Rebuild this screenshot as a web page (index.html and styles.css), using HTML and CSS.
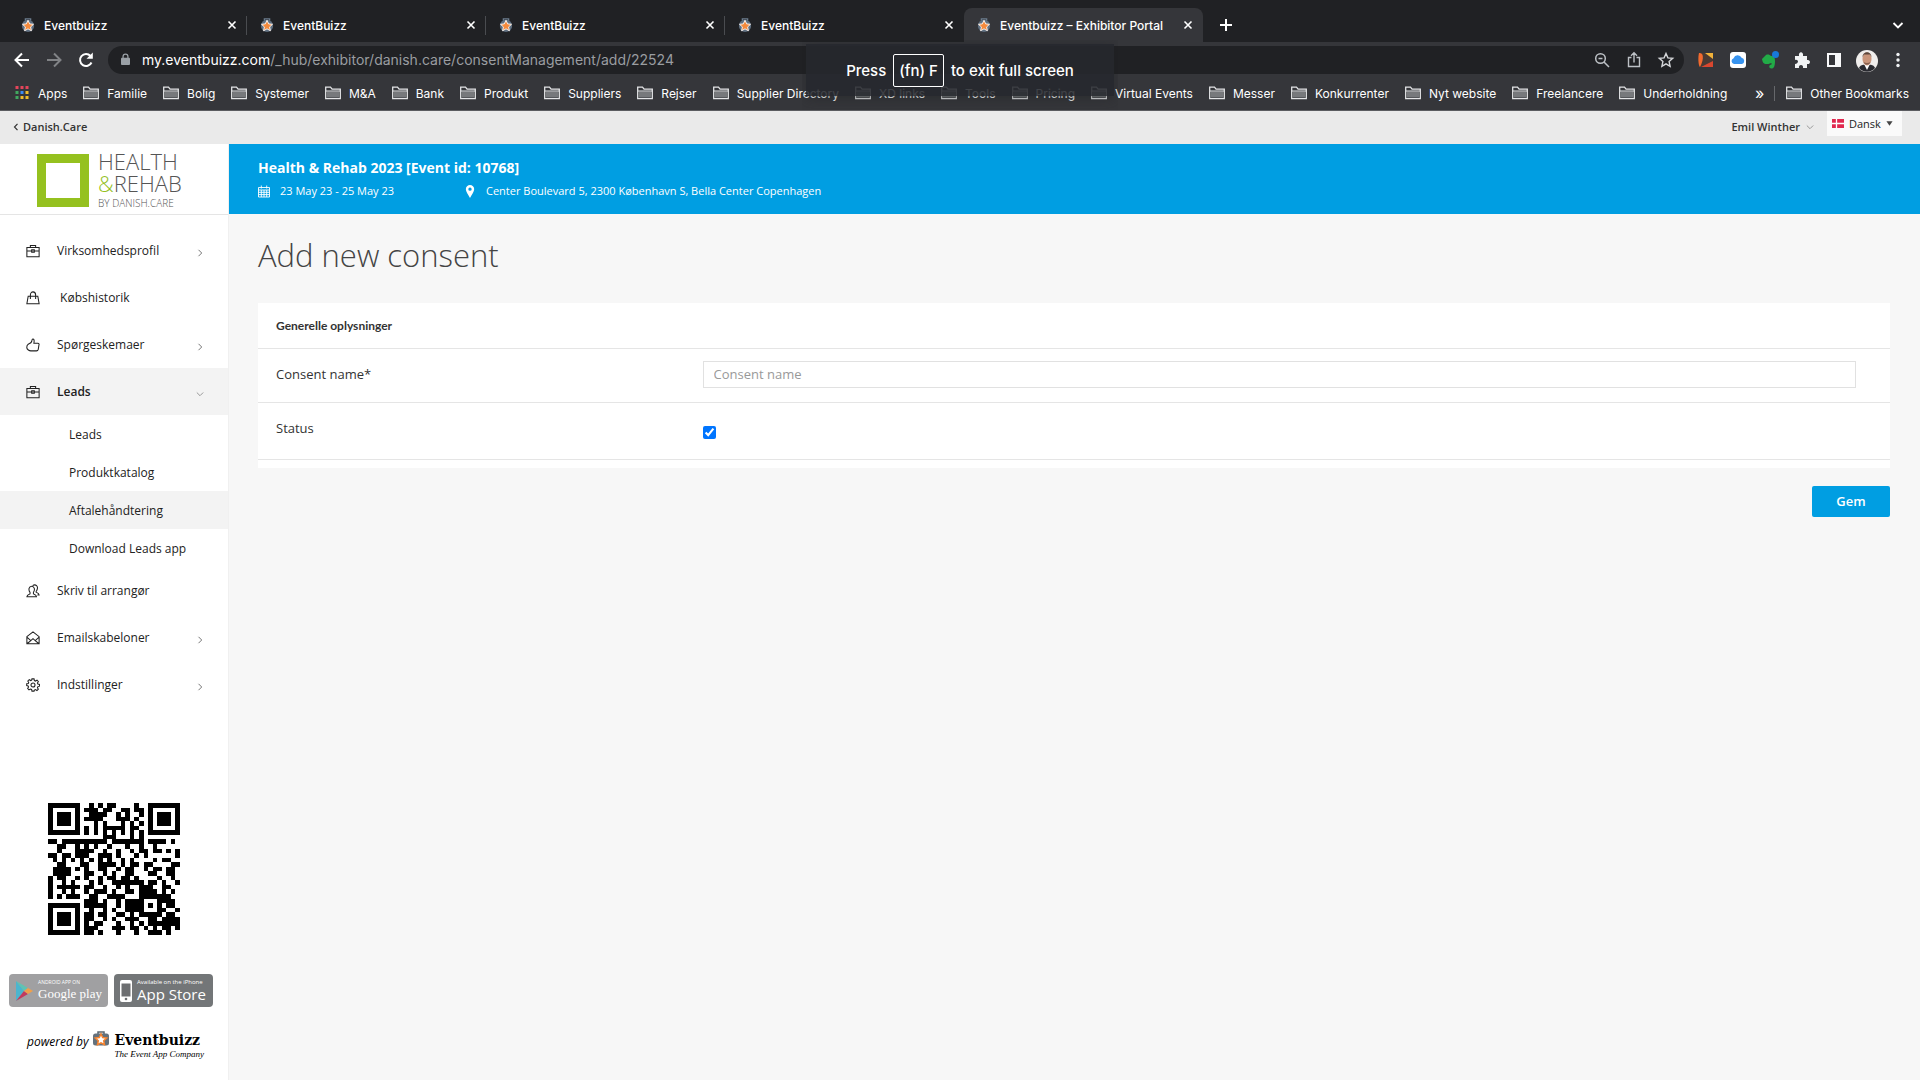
FILE: index.html
```html
<!DOCTYPE html>
<html lang="da">
<head>
    <meta charset="UTF-8">
    <meta name="viewport" content="width=device-width, initial-scale=1.0">
    <title>Eventbuizz – Exhibitor Portal</title>
    <link rel="stylesheet" href="styles.css">
</head>
<body>
    <!-- Shared icons -->
    <svg class="sprite" aria-hidden="true">
        <symbol id="favicon" viewBox="0 0 16 16">
            <path d="M5 3V1h6v2" fill="none" stroke="#6b7c8d" stroke-width="1.5"/>
            <circle cx="8" cy="9" r="7" fill="#5f6f80"/>
            <path d="M8 2.6l1.9 4.1 4.4.5-3.3 3 .9 4.4L8 12.4l-3.9 2.2.9-4.4-3.3-3 4.4-.5z" fill="#f58a3c" stroke="#fff" stroke-width="1"/>
        </symbol>
        <symbol id="cross" viewBox="0 0 10 10"><path d="M1.5 1.5l7 7M8.500 1.500l-7 7" fill="none" stroke="#fff" stroke-width="1.600"/></symbol>
        <symbol id="folder" viewBox="0 0 16 14">
            <path d="M.7 12.600V1.200h4.800l1.600 2h8.200v9.400z" fill="none" stroke="#e3e4e6" stroke-width="1.300"/>
            <path d="M2 5.500h12v6H2z" fill="#77797c"/>
            <path d="M1 5h14" stroke="#e3e4e6"/>
        </symbol>
        <symbol id="right" viewBox="0 0 8 8"><path d="M2.500.8L5.700 4 2.500 7.200" fill="none" stroke="#777"/></symbol>
        <symbol id="down" viewBox="0 0 8 8"><path d="M.8 2.500L4 5.700l3.200-3.200" fill="none" stroke="#999"/></symbol>
        <symbol id="case" viewBox="0 0 16 16">
            <path d="M1 4h14v10.500H1zM5 4V1.700h6V4M1 8h5.500M9.500 8H15M6.500 6.500h3v3h-3zM8 7.500v1" fill="none" stroke="#222" stroke-width="1.200"/>
        </symbol>
        <symbol id="bag" viewBox="0 0 16 16">
            <path d="M2.500 6h11L15 14.500H1zM5 9V4.500a3 3.500 0 0 1 6 0V9" fill="none" stroke="#222" stroke-width="1.200"/>
        </symbol>
        <symbol id="thumb" viewBox="0 0 16 16">
            <path d="M2 7.500c1-1 3.800-1.200 4.500-3.500.2-1 .2-2.500 1.200-2.800 1.500-.2 2 1.500 1.300 4.800h4.500c1.500 0 1.700 1.300 1.300 2L14 13c-.3 1.200-1 1.700-2 1.700H5.500C4 14.700 1 13.500.9 11c0-1.500.3-2.800 1.100-3.500z" fill="none" stroke="#222" stroke-width="1.200"/>
        </symbol>
        <symbol id="users" viewBox="0 0 16 16">
            <path d="M1 14.500c0-2 1-2.300 3.600-3.300V9.500C2.500 6.800 3.200 2.500 6.500 2.500s4 4.300 2 7v1.700c2.500 1 3.500 1.300 3.500 3.300zM7.500 1.800c3.500-2.200 7 .7 5 5.200-.6 1-1 1.200-1 2.300 2.500 1 3.500 1.500 3.500 3.200h-2" fill="none" stroke="#222" stroke-width="1.200"/>
        </symbol>
        <symbol id="mail" viewBox="0 0 16 16">
            <path d="M1 6.500L8 1l7 5.500v8H1zM1 7l4.500 4L8 8.700l2.500 2.300L15 7M1.500 14.300l4-3.300M14.500 14.300l-4-3.300" fill="none" stroke="#222" stroke-width="1.200"/>
        </symbol>
        <symbol id="gear" viewBox="0 0 16 16">
            <path d="M6.800 1h2.400l.4 1.900 1.300.6 1.700-1.100 1.500 1.600-1 1.700.5 1.200 1.900.4v2l-1.900.5-.5 1.300 1 1.700-1.600 1.500-1.700-1-1.200.5L9.200 15H6.800l-.4-1.900-1.300-.5-1.700 1-1.500-1.600 1-1.700-.5-1.300L.8 8.600v-2l1.800-.3.500-1.200-1-1.700 1.600-1.500 1.600 1 1.200-.5z" fill="none" stroke="#222" stroke-width="1.200"/>
            <circle cx="8" cy="8" r="2.300" fill="none" stroke="#222" stroke-width="1.200"/>
        </symbol>
    </svg>

    <!-- Browser window -->
    <div class="browser">
        <div class="tabs">
            <div class="tab"><svg class="fav"><use href="#favicon"/></svg><span>Eventbuizz</span><button aria-label="Close"><svg><use href="#cross"/></svg></button></div>
            <div class="tab"><svg class="fav"><use href="#favicon"/></svg><span>EventBuizz</span><button aria-label="Close"><svg><use href="#cross"/></svg></button></div>
            <div class="tab"><svg class="fav"><use href="#favicon"/></svg><span>EventBuizz</span><button aria-label="Close"><svg><use href="#cross"/></svg></button></div>
            <div class="tab last"><svg class="fav"><use href="#favicon"/></svg><span>EventBuizz</span><button aria-label="Close"><svg><use href="#cross"/></svg></button></div>
            <div class="tab active"><svg class="fav"><use href="#favicon"/></svg><span>Eventbuizz – Exhibitor Portal</span><button aria-label="Close"><svg><use href="#cross"/></svg></button></div>
            <button class="tool new-tab" aria-label="New tab"><svg viewBox="0 0 20 20"><path d="M10 4v12M4 10h12" stroke="#fff" stroke-width="2"/></svg></button>
            <button class="tool tab-list" aria-label="Search tabs"><svg viewBox="0 0 20 20"><path d="M5.500 8l4.500 4.500L14.500 8" fill="none" stroke="#fff" stroke-width="1.800"/></svg></button>
        </div>

        <div class="toolbar">
            <button class="tool" aria-label="Back"><svg viewBox="0 0 20 20"><path d="M17 10H4M10 3.500L3.500 10l6.500 6.500" fill="none" stroke="#fff" stroke-width="2"/></svg></button>
            <button class="tool" aria-label="Forward"><svg viewBox="0 0 20 20"><path d="M3 10h13M10 3.500l6.500 6.500-6.500 6.500" fill="none" stroke="#818386" stroke-width="2"/></svg></button>
            <button class="tool" aria-label="Reload"><svg viewBox="0 0 20 20"><path d="M15.500 12.500A6 6 0 1 1 14.500 6" fill="none" stroke="#fff" stroke-width="2"/><path d="M16.800 2.500v6.300h-6.300z" fill="#fff"/></svg></button>
            <div class="address">
                <svg class="lock" viewBox="0 0 10 14"><rect y="5" width="10" height="8" rx="1" fill="#9aa0a6"/><path d="M2.300 6V3.600a2.700 2.700 0 0 1 5.400 0V6" fill="none" stroke="#9aa0a6" stroke-width="1.400"/></svg>
                <div class="url">my.eventbuizz.com<span>/_hub/exhibitor/danish.care/consentManagement/add/22524</span></div>
                <button class="tool" aria-label="Zoom"><svg viewBox="0 0 20 20"><circle cx="8.500" cy="8.500" r="4.800" fill="none" stroke="#bdc1c6" stroke-width="1.500"/><path d="M12 12l5 5M6.500 8.500h4" stroke="#bdc1c6" stroke-width="1.500"/></svg></button>
                <button class="tool" aria-label="Share"><svg viewBox="0 0 20 20"><path d="M7.500 7.500h-3v9h11v-9h-3M10 12.500V3M7 5.800l3-3 3 3" fill="none" stroke="#bdc1c6" stroke-width="1.400"/></svg></button>
                <button class="tool" aria-label="Bookmark"><svg viewBox="0 0 20 20"><path d="M10 3.500l1.900 4.400 4.800.4-3.600 3.200 1 4.800-4.100-2.500-4.100 2.500 1-4.800-3.600-3.200 4.800-.4z" fill="none" stroke="#d5d7da" stroke-width="1.400"/></svg></button>
            </div>
            <button class="tool" aria-label="Extension"><svg viewBox="0 0 20 20"><path d="M3 3h14v14H3z" fill="#4a3a33"/><path d="M3 3c6-1 4 9 1 14-2-2-2-11-1-14z" fill="#f26a2e"/><path d="M9 3h8v6z" fill="#f0b23a"/><path d="M17 11v6H5z" fill="#d9472f"/></svg></button>
            <button class="tool" aria-label="iCloud"><svg viewBox="0 0 20 20"><rect x="2" y="2" width="16" height="16" rx="3" fill="#fff"/><path d="M6 14a3 3 0 0 1-.4-5.800 4.300 4.300 0 0 1 8-.4A3.200 3.200 0 0 1 14 14z" fill="#3793ef"/></svg></button>
            <button class="tool" aria-label="Evernote"><svg viewBox="0 0 20 20"><path d="M2 9l4-4c2-1 4 0 5 1 3 0 4 1 4 5 0 5-1 7.500-3.500 7.500-3 0-3-4 0-4v-1.500c-3 1-3 1-5 1-3 0-4-2-4.500-5z" fill="#22ab47"/><circle cx="15.500" cy="4.500" r="3.500" fill="#1879d8"/></svg></button>
            <button class="tool" aria-label="Extensions"><svg viewBox="0 0 20 20"><path d="M3 6h4c-1-5 5-5 4 0h4v4c4-1 4 5 0 4v4h-4c1-4-5-4-4 0H3v-4c4 0 4-5 0-4z" fill="#f1f3f4"/></svg></button>
            <button class="tool" aria-label="Side panel"><svg viewBox="0 0 20 20"><path d="M3 3h14v14H3zM5 5v10h6V5z" fill="#f8f9fa" fill-rule="evenodd"/></svg></button>
            <button class="tool" aria-label="Profile"><svg class="avatar" viewBox="0 0 22 22"><circle cx="11" cy="11" r="11" fill="#f0eeec"/><path d="M3 18c1-3 4-3.500 8-3.500s7 .5 8 3.500c-4 5-12 5-16 0z" fill="#292a30"/><path d="M8 14l3 6 3-6z" fill="#fff"/><ellipse cx="11" cy="9" rx="4.500" ry="6.500" fill="#c9957b"/><path d="M6.500 7c0-6.500 9-6.500 9 0l-1.500-2.500H8z" fill="#5d473c"/><path d="M7.500 12c1.500 3.500 5.500 3.500 7 0-2 1.300-5 1.300-7 0z" fill="#86604f"/></svg></button>
            <button class="tool" aria-label="Menu"><svg viewBox="0 0 20 20" fill="#f1f3f4"><circle cx="10" cy="4.500" r="1.700"/><circle cx="10" cy="10" r="1.700"/><circle cx="10" cy="15.500" r="1.700"/></svg></button>
        </div>

        <nav class="bookmarks">
            <a href="#"><svg viewBox="0 0 15 14"><path d="M1 0h3v3H1zM6 0h3v3H6zM11 0h3v3h-3z" fill="#e4455a"/><path d="M1 5h3v3H1zM1 10h3v3H1z" fill="#41a85f"/><path d="M6 5h3v3H6z" fill="#3d8bf2"/><path d="M11 5h3v3h-3zM6 10h3v3H6zM11 10h3v3h-3z" fill="#f2bd2c"/></svg>Apps</a>
            <a href="#"><svg><use href="#folder"/></svg>Familie</a>
            <a href="#"><svg><use href="#folder"/></svg>Bolig</a>
            <a href="#"><svg><use href="#folder"/></svg>Systemer</a>
            <a href="#"><svg><use href="#folder"/></svg>M&amp;A</a>
            <a href="#"><svg><use href="#folder"/></svg>Bank</a>
            <a href="#"><svg><use href="#folder"/></svg>Produkt</a>
            <a href="#"><svg><use href="#folder"/></svg>Suppliers</a>
            <a href="#"><svg><use href="#folder"/></svg>Rejser</a>
            <a href="#"><svg><use href="#folder"/></svg>Supplier Directory</a>
            <a href="#"><svg><use href="#folder"/></svg>XD links</a>
            <a href="#"><svg><use href="#folder"/></svg>Tools</a>
            <a href="#"><svg><use href="#folder"/></svg>Pricing</a>
            <a href="#"><svg><use href="#folder"/></svg>Virtual Events</a>
            <a href="#"><svg><use href="#folder"/></svg>Messer</a>
            <a href="#"><svg><use href="#folder"/></svg>Konkurrenter</a>
            <a href="#"><svg><use href="#folder"/></svg>Nyt website</a>
            <a href="#"><svg><use href="#folder"/></svg>Freelancere</a>
            <a href="#"><svg><use href="#folder"/></svg>Underholdning</a>
            <button class="more">»</button>
            <a href="#" class="other"><svg><use href="#folder"/></svg>Other Bookmarks</a>
        </nav>
        <div class="toast">Press <kbd>(fn) F</kbd> to exit full screen</div>
    </div>

    <!-- Account bar -->
    <div class="topbar">
        <a href="#" class="back"><svg viewBox="0 0 6 8"><path d="M4.500.8L1.500 4l3 3.200" fill="none" stroke="#333" stroke-width="1.200"/></svg>Danish.Care</a>
        <button class="account">Emil Winther <svg><use href="#down"/></svg></button>
        <div class="language">
            <svg class="flag" viewBox="0 0 12 9"><path d="M0 0h12v9H0z" fill="#e0284f"/><path d="M4.500 0v9M0 4.500h12" stroke="#fff" stroke-width="1.300"/></svg>
            <select aria-label="Sprog"><option>Dansk</option></select>
            <svg class="caret" viewBox="0 0 8 5"><path d="M.5 0h7L4 5z" fill="#444"/></svg>
        </div>
    </div>

    <div class="page">
        <aside class="sidebar">
            <div class="logo">
                <div class="logo-square"></div>
                <div class="logo-text">
                    <span>HEALTH</span>
                    <span><i>&amp;</i>REHAB</span>
                    <small>BY DANISH.CARE</small>
                </div>
            </div>
            <nav class="menu">
                <a href="#"><svg class="icon"><use href="#case"/></svg>Virksomhedsprofil<svg class="arrow"><use href="#right"/></svg></a>
                <a href="#"><svg class="icon"><use href="#bag"/></svg>&nbsp;Købshistorik</a>
                <a href="#"><svg class="icon"><use href="#thumb"/></svg>Spørgeskemaer<svg class="arrow"><use href="#right"/></svg></a>
                <a href="#" class="open"><svg class="icon"><use href="#case"/></svg>Leads<svg class="arrow"><use href="#down"/></svg></a>
                <div class="submenu">
                    <a href="#">Leads</a>
                    <a href="#">Produktkatalog</a>
                    <a href="#" class="current">Aftalehåndtering</a>
                    <a href="#">Download Leads app</a>
                </div>
                <a href="#"><svg class="icon"><use href="#users"/></svg>Skriv til arrangør</a>
                <a href="#"><svg class="icon"><use href="#mail"/></svg>Emailskabeloner<svg class="arrow"><use href="#right"/></svg></a>
                <a href="#"><svg class="icon"><use href="#gear"/></svg>Indstillinger<svg class="arrow"><use href="#right"/></svg></a>
            </nav>
            <svg class="qr" viewBox="0 0 29 29" shape-rendering="crispEdges"><path id="qr-path"/></svg>
            <div class="stores">
                <a href="#" class="store google">
                    <svg viewBox="0 0 18 22"><path d="M1 1v20l8-10z" fill="#4bb5cf"/><path d="M1 1l12 7-4 3z" fill="#5fc3b3"/><path d="M1 21l12-7-4-3z" fill="#c23a5e"/><path d="M13 8l5 3-5 3-4-3z" fill="#f0a04b"/></svg>
                    <span><small>ANDROID APP ON</small>Google play</span>
                </a>
                <a href="#" class="store apple">
                    <svg viewBox="0 0 12 22"><rect width="12" height="22" rx="2" fill="#fff"/><path d="M1.500 3.500h9v13h-9z" fill="#6c6e70"/><circle cx="6" cy="19" r="1.300" fill="#6c6e70"/></svg>
                    <span><small>Available on the iPhone</small>App Store</span>
                </a>
            </div>
            <div class="powered">
                <em>powered by</em>
                <svg viewBox="0 0 16 15"><path d="M5 3V1h6v2" fill="none" stroke="#59656f" stroke-width="1.500"/><rect y="2.500" width="16" height="12" rx="2.500" fill="#64717c"/><path d="M8 3l1.700 3.500 4 .5-3 2.700.8 4L8 11.800l-3.500 1.900.8-4-3-2.700 4-.5z" fill="#fff" stroke="#f5832f" stroke-width="1.500"/></svg>
                <div class="brand"><strong>Eventbuizz</strong><em>The Event App Company</em></div>
            </div>
        </aside>

        <main class="main">
            <header class="event">
                <h2>Health &amp; Rehab 2023 [Event id: 10768]</h2>
                <div class="event-info">
                    <span class="date"><svg viewBox="0 0 12 12"><path d="M.5 2h11v9.500H.5zM.5 4.500h11M.5 6.800h11M.5 9.100h11M3.300 4.500v7M6 4.500v7M8.700 4.500v7M3.300 0v3M8.700 0v3" fill="none" stroke="#fff" stroke-width=".9"/></svg>23 May 23 - 25 May 23</span>
                    <span><svg viewBox="0 0 12 14"><path d="M6 0a4.500 4.500 0 0 1 4.500 4.500C10.500 7 8 10 6 14 4 10 1.500 7 1.500 4.500A4.500 4.500 0 0 1 6 0zm0 2.700a1.800 1.800 0 1 0 0 3.600 1.800 1.800 0 0 0 0-3.600z" fill="#fff"/></svg>Center Boulevard 5, 2300 København S, Bella Center Copenhagen</span>
                </div>
            </header>
            <form class="content">
                <h1>Add new consent</h1>
                <section class="panel">
                    <h3>Generelle oplysninger</h3>
                    <div class="row">
                        <label for="name">Consent name*</label>
                        <input type="text" id="name" placeholder="Consent name">
                    </div>
                    <div class="row status">
                        <label for="status">Status</label>
                        <input type="checkbox" id="status" checked>
                    </div>
                </section>
                <button type="button" class="save">Gem</button>
            </form>
        </main>
    </div>

    <script>
        const rows = [
            '#######..#.#.##....#..#######',
            '#.....#.###.##..##.##.#.....#',
            '#.###.#..####..#.#..#.#.###.#',
            '#.###.#.####...###.#..#.###.#',
            '#.###.#...#.#...#.#.#.#.###.#',
            '#.....#.#.#.#####.##..#.....#',
            '#######.#.#.#.#.#.#.#.#######',
            '............###...#.#........',
            '##.##########.#######.####.#.',
            '..##..#.#.#..#...#..#..#.....',
            '..#...####..#..#..#.##.##.#.#',
            '##.##.###..###.#...#.#......#',
            '.#.#.#.#.#.#.#..#.#....#.##..',
            '..##...##..####.#.##.##....##',
            '.####.#.#..##..#.##..#.##.##.',
            '.####...##..#.#..##...##..##.',
            '#.##..#.#..#.##.##.#....#..#.',
            '#..#.#...#.#..#######.##.#..#',
            '#.#####.##..#..#.#..###..##..',
            '#..#.#..#.###.#..##.####.#.#.',
            '#.#.###..##..####...#######..',
            '........###.#..#.####...####.',
            '#######.#####..#.####.#.#.##.',
            '#.....#..#..#.#..####...##..#',
            '#.###.#.##.##..##.#.#####.##.',
            '#.###.#.##..#.#..###..##.####',
            '#.###.#.#.##...#..#.#.#######',
            '#.....#.###...###.##.#.#.##.#',
            '#######.##.#...#...#..###.#..'
        ];
        let d = '';
        rows.forEach((row, y) => {
            for (let x = 0; x < 29; x++) {
                if (row[x] === '#') d += `M${x} ${y}h1v1h-1z`;
            }
        });
        document.getElementById('qr-path').setAttribute('d', d);
    </script>
</body>
</html>
```

FILE: styles.css
```css
* {
    box-sizing: border-box;
}
body {
    margin: 0;
    min-height: 100vh;
    display: flex;
    flex-direction: column;
    font-family: "Open Sans", sans-serif;
    font-size: 12px;
    color: #333;
    background: #f7f7f7;
}
a {
    color: inherit;
    text-decoration: none;
}
button {
    font: inherit;
    color: inherit;
    border: 0;
    padding: 0;
    background: none;
    cursor: pointer;
}
svg {
    display: block;
    flex: none;
}
.sprite {
    position: absolute;
    width: 0;
    height: 0;
}

/* Browser window */
.browser {
    position: relative;
    font-family: Inter, sans-serif;
    font-size: 12px;
    font-weight: 500;
    color: #fff;
    background: #35363a;
    border-bottom: 1px solid #5b5c60;
}
.tabs {
    display: flex;
    align-items: center;
    height: 42px;
    padding: 8px 12px 0 8px;
    background: #202124;
}
.tab {
    display: flex;
    align-items: center;
    width: 239px;
    height: 34px;
    padding: 0 10px 0 13px;
    gap: 9px;
    position: relative;
}
.tab::after {
    content: "";
    position: absolute;
    right: 0;
    top: 8px;
    width: 1px;
    height: 19px;
    background: #4a4c50;
}
.tab.last::after,
.tab.active::after {
    display: none;
}
.tab.active {
    background: #35363a;
    border-radius: 8px 8px 0 0;
}
.tab span {
    flex: 1;
    white-space: nowrap;
}
.tab button svg {
    width: 10px;
    height: 10px;
}
.fav {
    width: 14px;
    height: 14px;
}
.tool {
    width: 20px;
    height: 20px;
    flex: none;
}
.tool svg {
    width: 20px;
    height: 20px;
}
.tool .avatar {
    width: 22px;
    height: 22px;
}
.new-tab {
    margin-left: 13px;
}
.tab-list {
    margin-left: auto;
}
.toolbar {
    display: flex;
    align-items: center;
    gap: 12px;
    height: 35px;
    padding: 0 12px;
}
.address {
    flex: 1;
    display: flex;
    align-items: center;
    gap: 12px;
    height: 28px;
    padding: 0 8px 0 13px;
    border-radius: 14px;
    background: #202124;
}
.lock {
    width: 9px;
    height: 13px;
}
.url {
    flex: 1;
    font-size: 14px;
    font-weight: 400;
}
.url span {
    color: #9a9da1;
}
.bookmarks {
    display: flex;
    align-items: center;
    gap: 16px;
    height: 33px;
    padding: 0 11px 1px 14px;
    font-weight: 400;
    white-space: nowrap;
}
.bookmarks a {
    display: flex;
    align-items: center;
    gap: 8px;
}
.bookmarks svg {
    width: 16px;
    height: 14px;
}
.more {
    margin-left: auto;
    font-size: 16px;
}
.bookmarks .other {
    padding-left: 11px;
    margin-left: -6px;
    border-left: 1px solid #66686b;
}
.toast {
    position: absolute;
    top: 44px;
    left: 50%;
    transform: translateX(-50%);
    display: flex;
    align-items: center;
    justify-content: center;
    gap: 7px;
    width: 308px;
    height: 52px;
    font-size: 15px;
    background: rgba(38, 40, 46, 0.88);
    box-shadow: 0 2px 12px rgba(32, 33, 36, 0.5);
    clip-path: inset(-4px -4px -14px -4px);
    white-space: nowrap;
}
.toast kbd {
    padding: 6px 5px;
    font: inherit;
    border: 1px solid #fff;
    border-radius: 2px;
}

/* Account bar */
.topbar {
    display: flex;
    align-items: center;
    height: 33px;
    padding: 0 18px 2px 13px;
    font-size: 11px;
    font-weight: 600;
    background: #eaeaea;
}
.back {
    display: flex;
    align-items: center;
    gap: 4px;
}
.back svg {
    width: 6px;
    height: 8px;
}
.account {
    display: flex;
    align-items: center;
    gap: 6px;
    margin-left: auto;
}
.account svg {
    width: 8px;
    height: 8px;
}
.language {
    display: flex;
    align-items: center;
    align-self: flex-start;
    gap: 5px;
    height: 25px;
    margin-left: 13px;
    padding: 0 9px 0 5px;
    background: #fafafa;
}
.language select {
    appearance: none;
    border: 0;
    padding: 0;
    font: inherit;
    font-weight: 400;
    color: #222;
    background: none;
}
.flag {
    width: 12px;
    height: 9px;
}
.caret {
    width: 7px;
    height: 5px;
}

.page {
    flex: 1;
    display: flex;
}

/* Sidebar */
.sidebar {
    width: 229px;
    flex: none;
    background: #fff;
    border-right: 1px solid #f0f0f0;
}
.logo {
    display: flex;
    gap: 9px;
    height: 71px;
    padding: 10px 0 0 37px;
    border-bottom: 1px solid #e5e5e5;
}
.logo-square {
    width: 52px;
    height: 53px;
    border: 9px solid #95c11f;
}
.logo-text {
    display: flex;
    flex-direction: column;
    font-weight: 300;
    font-size: 22px;
    line-height: 22px;
    margin-top: -4px;
    color: #555;
}
.logo-text i {
    font-style: normal;
    color: #95c11f;
}
.logo-text small {
    font-size: 10px;
    line-height: 18px;
}
.menu {
    padding-top: 12px;
    color: #222;
}
.menu > a {
    display: flex;
    align-items: center;
    height: 47px;
    padding: 0 24px 0 26px;
}
.menu .icon {
    width: 14px;
    height: 14px;
    margin-right: 17px;
}
.menu .arrow {
    width: 8px;
    height: 8px;
    margin: 4px 0 0 auto;
}
.menu .open {
    font-weight: 600;
    background: #f3f3f3;
}
.submenu a {
    display: flex;
    align-items: center;
    height: 38px;
    padding-left: 69px;
}
.submenu .current {
    background: #f3f3f3;
}
.qr {
    width: 132px;
    height: 132px;
    margin: 95px 0 0 48px;
}
.stores {
    display: flex;
    gap: 6px;
    padding: 39px 0 0 9px;
}
.store {
    display: flex;
    align-items: center;
    width: 99px;
    height: 33px;
    padding: 0 6px;
    gap: 5px;
    border-radius: 4px;
    color: #fff;
    background: #a0a0a2;
    font-size: 15px;
    line-height: 16px;
    white-space: nowrap;
}
.store small {
    display: block;
    font-size: 5px;
    line-height: 7px;
}
.store svg {
    width: 18px;
    height: 22px;
}
.google {
    font-family: "Liberation Serif", serif;
    font-size: 13px;
}
.google small {
    font-family: "Open Sans", sans-serif;
}
.apple {
    background: #737678;
}
.apple svg {
    width: 12px;
}
.apple small {
    font-size: 6px;
}
.powered {
    display: flex;
    align-items: flex-start;
    gap: 5px;
    padding: 24px 0 0 27px;
    color: #000;
}
.powered > em {
    line-height: 22px;
    font-size: 12px;
}
.powered svg {
    width: 16px;
    height: 15px;
}
.brand strong,
.brand em {
    display: block;
    white-space: nowrap;
}
.brand strong {
    font-family: "DejaVu Serif", serif;
    font-size: 14px;
    line-height: 18px;
}
.brand em {
    font-family: "Liberation Serif", serif;
    font-size: 9px;
    line-height: 10px;
}

/* Content */
.main {
    flex: 1;
}
.event {
    height: 70px;
    padding: 14px 29px;
    color: #fff;
    background: #009ee2;
}
.event h2 {
    margin: 0 0 4px;
    font-size: 14px;
    font-weight: 700;
    line-height: 20px;
}
.event-info {
    display: flex;
    font-size: 11px;
    font-weight: 500;
    line-height: 18px;
}
.event-info span {
    display: flex;
    align-items: center;
    gap: 10px;
}
.event-info svg {
    width: 12px;
    height: 13px;
}
.event-info .date {
    width: 206px;
}
.content {
    display: flex;
    flex-direction: column;
    padding: 17px 30px 0 29px;
}
.content h1 {
    margin: 0 0 24px;
    font-size: 31px;
    font-weight: 300;
    line-height: 48px;
    color: #444;
}
.panel {
    padding-bottom: 8px;
    background: #fff;
}
.panel h3 {
    margin: 0;
    padding: 0 18px;
    font-family: Lato, sans-serif;
    font-size: 12px;
    line-height: 45px;
    border-bottom: 1px solid #e5e5e5;
}
.row {
    display: flex;
    padding: 12px 34px 14px 18px;
    font-size: 13px;
    line-height: 27px;
    border-bottom: 1px solid #e5e5e5;
}
.row label {
    flex: 0 0 27%;
}
.row input[type="text"] {
    flex: 1;
    height: 27px;
    padding: 0 10px 2px;
    font: inherit;
    line-height: 20px;
    border: 1px solid #e1e1e1;
    background: #fff;
}
.row input::placeholder {
    color: #999;
}
.row.status {
    padding-bottom: 17px;
}
.row input[type="checkbox"] {
    width: 13px;
    height: 13px;
    margin: 11px 0 0;
}
.save {
    align-self: flex-end;
    margin-top: 18px;
    width: 78px;
    height: 31px;
    padding-bottom: 2px;
    font-size: 13px;
    font-weight: 600;
    color: #fff;
    background: #009ee2;
    border-radius: 2px;
}
```
